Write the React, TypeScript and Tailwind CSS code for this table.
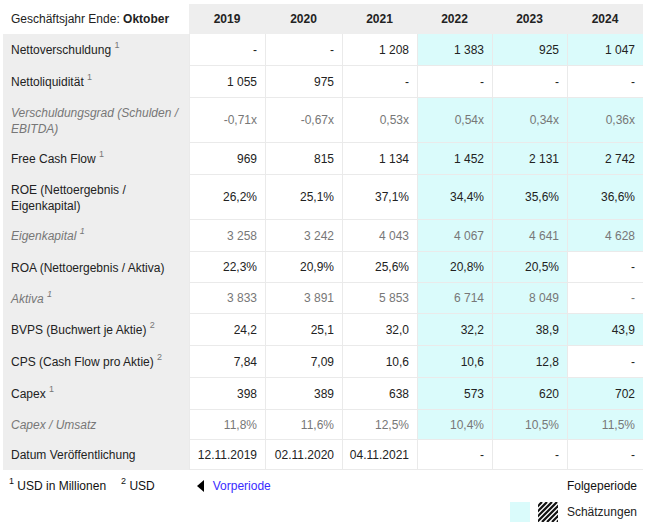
import React from "react";

type Row = {
  label: string;
  note?: string;
  muted?: boolean;
  h: string;
  values: string[];
};

const years = ["2019", "2020", "2021", "2022", "2023", "2024"];

const cols = ["w-[76px]", "w-[77px]", "w-[75px]", "w-[75px]", "w-[75px]", "w-[76px]"];

const rows: Row[] = [
  { label: "Nettoverschuldung", note: "1", h: "h-[32px]", values: ["-", "-", "1 208", "1 383", "925", "1 047"] },
  { label: "Nettoliquidität", note: "1", h: "h-[32px]", values: ["1 055", "975", "-", "-", "-", "-"] },
  { label: "Verschuldungsgrad (Schulden / EBITDA)", muted: true, h: "h-[45px]", values: ["-0,71x", "-0,67x", "0,53x", "0,54x", "0,34x", "0,36x"] },
  { label: "Free Cash Flow", note: "1", h: "h-[32px]", values: ["969", "815", "1 134", "1 452", "2 131", "2 742"] },
  { label: "ROE (Nettoergebnis / Eigenkapital)", h: "h-[45px]", values: ["26,2%", "25,1%", "37,1%", "34,4%", "35,6%", "36,6%"] },
  { label: "Eigenkapital", note: "1", muted: true, h: "h-[32px]", values: ["3 258", "3 242", "4 043", "4 067", "4 641", "4 628"] },
  { label: "ROA (Nettoergebnis / Aktiva)", h: "h-[31px]", values: ["22,3%", "20,9%", "25,6%", "20,8%", "20,5%", "-"] },
  { label: "Aktiva", note: "1", muted: true, h: "h-[31px]", values: ["3 833", "3 891", "5 853", "6 714", "8 049", "-"] },
  { label: "BVPS (Buchwert je Aktie)", note: "2", h: "h-[32px]", values: ["24,2", "25,1", "32,0", "32,2", "38,9", "43,9"] },
  { label: "CPS (Cash Flow pro Aktie)", note: "2", h: "h-[32px]", values: ["7,84", "7,09", "10,6", "10,6", "12,8", "-"] },
  { label: "Capex", note: "1", h: "h-[32px]", values: ["398", "389", "638", "573", "620", "702"] },
  { label: "Capex / Umsatz", muted: true, h: "h-[30px]", values: ["11,8%", "11,6%", "12,5%", "10,4%", "10,5%", "11,5%"] },
  { label: "Datum Veröffentlichung", h: "h-[30px]", values: ["12.11.2019", "02.11.2020", "04.11.2021", "-", "-", "-"] },
];

function Sup({ n, className = "" }: { n: string; className?: string }) {
  return <sup className={`relative -top-[1px] text-[9px] align-super ${className}`}>{n}</sup>;
}

function HatchBox() {
  return (
    <svg width="20" height="20" viewBox="0 0 20 20">
      <defs>
        <clipPath id="hb">
          <rect x="0" y="0" width="20" height="20" />
        </clipPath>
      </defs>
      <g clipPath="url(#hb)" stroke="#111" strokeWidth="2.2">
        {[-16, -11, -6, -1, 4, 9, 14, 19, 24, 29].map((o) => (
          <line key={o} x1={o} y1={20} x2={o + 20} y2={0} />
        ))}
      </g>
    </svg>
  );
}

function DataTable() {
  return (
    <div className="ml-[3px] mt-[4px] w-[640px]">
      {/* header */}
      <div className="flex h-[30px]">
        <div className="w-[186px] flex items-center pl-2 text-[#222]">
          Geschäftsjahr Ende:&nbsp;<span className="font-bold">Oktober</span>
        </div>
        {years.map((y, i) => (
          <div key={y} className={`${cols[i]} bg-[#eeeeee] flex items-center justify-center font-bold text-[#222]`}>
            {y}
          </div>
        ))}
      </div>
      {rows.map((r) => (
        <div key={r.label} className={`flex ${r.h}`}>
          <div
            className={`w-[186px] bg-[#eeeeee] flex items-center pl-2 pr-1 leading-[16px] ${
              r.muted ? "italic text-[#777]" : "text-[#222]"
            }`}
          >
            <span>
              {r.label}
              {r.note && (
                <>
                  {" "}
                  <Sup n={r.note} className="text-[#777]" />
                </>
              )}
            </span>
          </div>
          {r.values.map((v, i) => {
            const est = i >= 3 && v !== "-";
            return (
              <div
                key={i}
                className={`${cols[i]} border-l border-b border-[#eaeaea] flex items-center justify-end pr-2 ${
                  est ? "bg-[#dafbfb]" : "bg-white"
                } ${r.muted ? "text-[#777]" : "text-[#222]"}`}
              >
                {v}
              </div>
            );
          })}
        </div>
      ))}
    </div>
  );
}

export default function App() {
  return (
    <div className="w-[645px] h-[529px] bg-white overflow-hidden font-['Liberation_Sans',Arial,sans-serif] text-[12px] text-[#222]">
      <DataTable />
      <div className="flex items-center h-[32px] pl-[9px] pr-[8px] text-[#111]">
        <span>
          <Sup n="1" /> USD in Millionen
        </span>
        <span className="ml-[15px]">
          <Sup n="2" /> USD
        </span>
        <span className="ml-[42px] flex items-center">
          <svg width="8" height="12" viewBox="0 0 8 12">
            <polygon points="7,0 7,12 0,6" fill="#000" />
          </svg>
          <span className="ml-[8px] text-[#3a2bff]">Vorperiode</span>
        </span>
        <span className="ml-auto">Folgeperiode</span>
      </div>
      <div className="flex items-center justify-end pr-[8px] gap-[8px]">
        <div className="w-[20px] h-[20px] bg-[#dafbfb]" />
        <HatchBox />
        <span className="ml-[1px]">Schätzungen</span>
      </div>
    </div>
  );
}
